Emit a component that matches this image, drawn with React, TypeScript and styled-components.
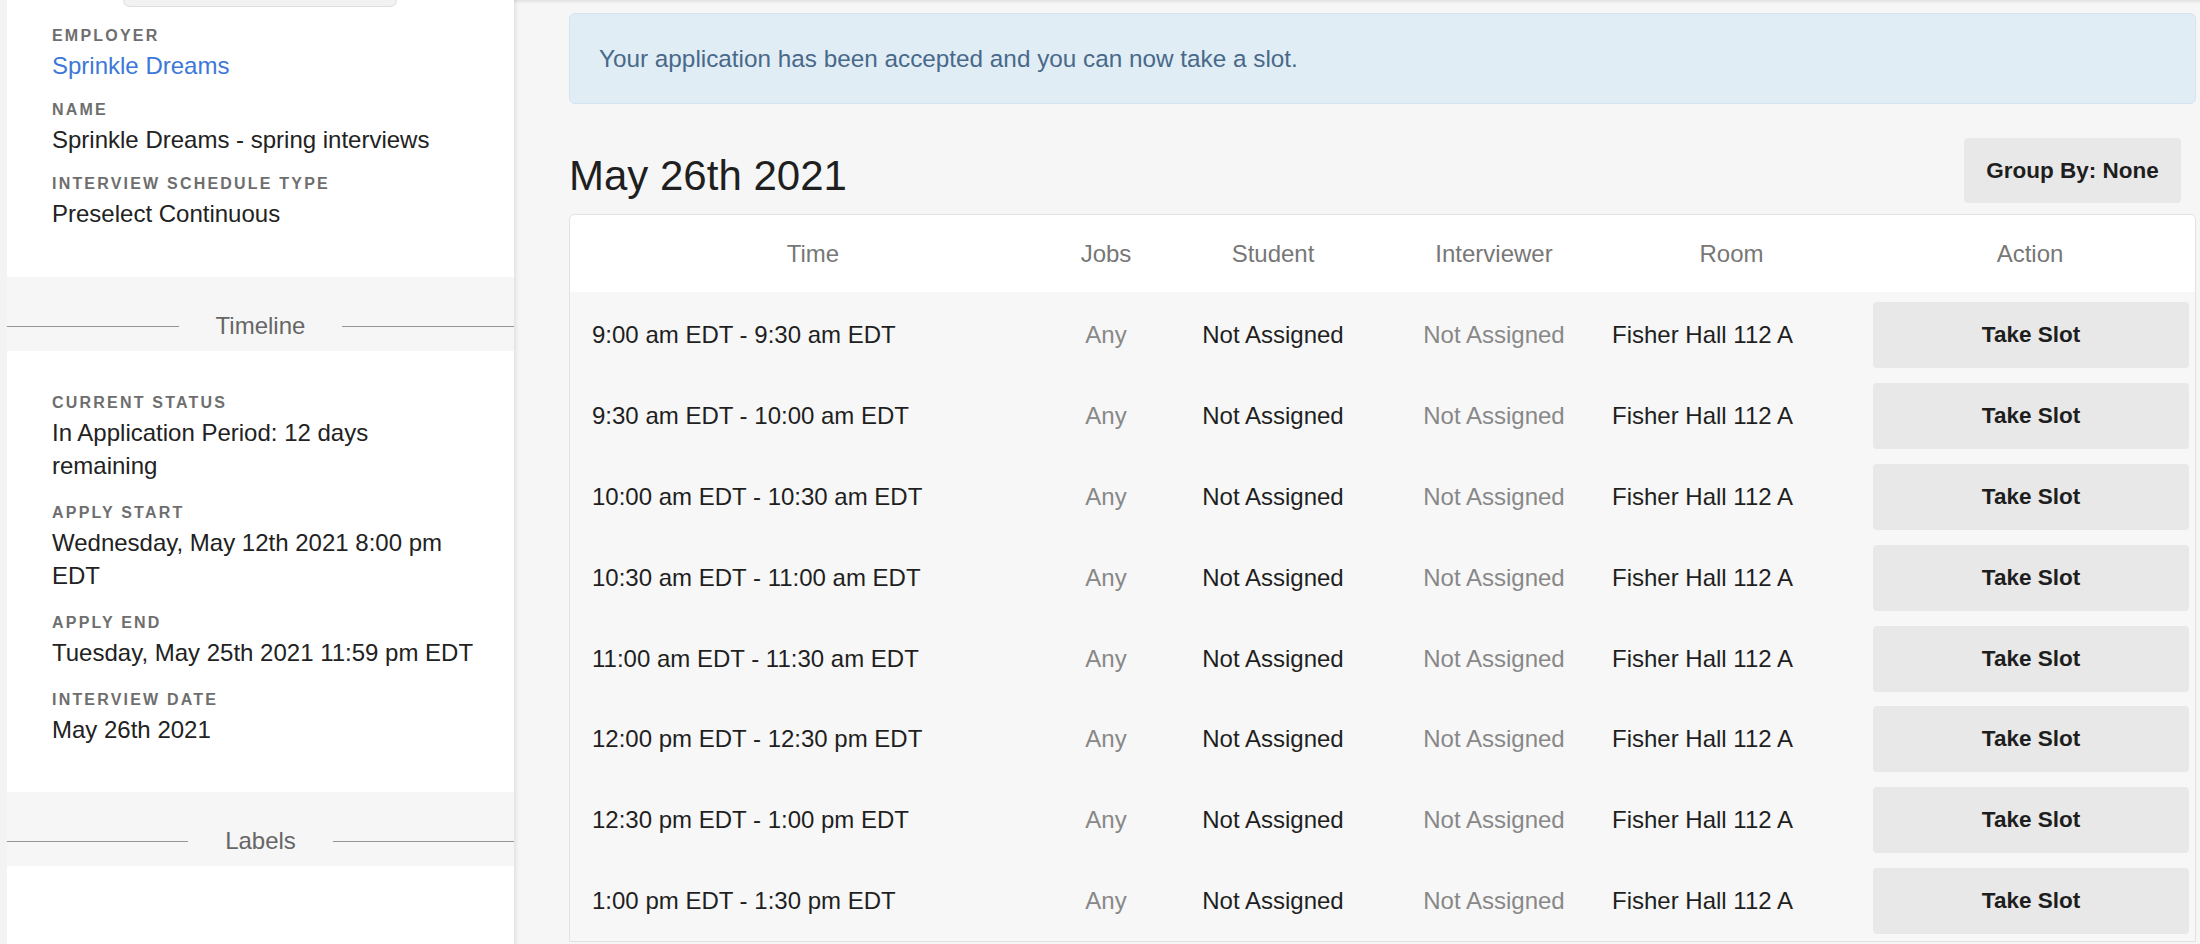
import React from 'react';
import styled, { createGlobalStyle } from 'styled-components';

const GlobalStyle = createGlobalStyle`
  html, body {
    margin: 0;
    padding: 0;
    background: #f6f6f6;
    font-family: 'Liberation Sans', Arial, sans-serif;
    color: #222;
  }
  * { box-sizing: border-box; }
`;

const Page = styled.div`
  display: flex;
  height: 100vh;
  overflow: hidden;
  padding-left: 7px;
  background: #f3f3f3;
`;

const Sidebar = styled.aside`
  width: 507px;
  flex-shrink: 0;
  background: #fff;
  display: flex;
  flex-direction: column;
`;

const TopTab = styled.div`
  margin-left: 116px;
  width: 274px;
  height: 7px;
  background: #f2f2f2;
  border: 1px solid #dedede;
  border-top: none;
  border-radius: 0 0 10px 10px;
`;

const InfoSection = styled.section<{ $gap: number; $top: number; $bottom: number }>`
  display: flex;
  flex-direction: column;
  gap: ${(p) => p.$gap}px;
  padding: ${(p) => p.$top}px 35px ${(p) => p.$bottom}px 45px;
`;

const Field = styled.div`
  display: flex;
  flex-direction: column;
  gap: 2px;
`;

const Label = styled.div`
  font-size: 16px;
  line-height: 22px;
  font-weight: 700;
  letter-spacing: 2.2px;
  text-transform: uppercase;
  color: #6e6e6e;
`;

const Value = styled.div<{ $link?: boolean }>`
  font-size: 24px;
  line-height: 33px;
  max-width: 427px;
  color: ${(p) => (p.$link ? '#3d78d8' : '#222')};
`;

const DividerBand = styled.div`
  background: #f6f6f6;
  padding: 36px 0 12px;
`;

const Divider = styled.div`
  display: flex;
  align-items: center;
  height: 26px;
`;

const Rule = styled.span`
  flex: 1;
  height: 1px;
  background: #959595;
`;

const DividerText = styled.span`
  margin: 0 37px;
  font-size: 24px;
  color: #666;
`;

const Main = styled.main`
  flex: 1;
  min-width: 0;
  display: flex;
  flex-direction: column;
  padding: 13px 4px 0 55px;
  background: #f6f6f6;
  box-shadow: inset 0 4px 3px -2px rgba(0, 0, 0, 0.08),
    inset 5px 0 4px -3px rgba(0, 0, 0, 0.09);
`;

const Banner = styled.div`
  height: 91px;
  display: flex;
  align-items: center;
  padding-left: 29px;
  background: #e1edf5;
  border: 1px solid #d2e4ef;
  border-radius: 6px;
  font-size: 24.3px;
  color: #48698a;
`;

const HeadRow = styled.div`
  display: flex;
  align-items: center;
  justify-content: space-between;
  margin: 34px 0 11px;
  padding-right: 15px;
`;

const DayTitle = styled.h1`
  margin: 11px 0 0;
  font-size: 42px;
  font-weight: 400;
  line-height: 50px;
  color: #1f1f1f;
`;

const GreyButton = styled.button<{ $w?: number }>`
  width: ${(p) => (p.$w ? `${p.$w}px` : '100%')};
  height: 65px;
  border: none;
  border-radius: 4px;
  background: #e8e8e8;
  font-family: inherit;
  font-size: 22.5px;
  font-weight: 700;
  color: #1e1e1e;
  cursor: pointer;
`;

const Card = styled.div`
  border: 1px solid #e2e2e2;
  border-radius: 6px 6px 0 0;
  background: #f7f7f7;
  overflow: hidden;
`;

const COLUMNS = '486px 100px 234px 208px 267px 1fr';

const HeaderRow = styled.div`
  display: grid;
  grid-template-columns: ${COLUMNS};
  height: 77px;
  align-items: center;
  background: #fff;
`;

const HeaderCell = styled.div`
  text-align: center;
  font-size: 24px;
  color: #777;
`;

const Body = styled.div`
  padding-top: 3px;
`;

const Row = styled.div`
  display: grid;
  grid-template-columns: ${COLUMNS};
  height: 80.8px;
  align-items: center;
`;

const Cell = styled.div<{ $align?: 'left' | 'center'; $muted?: boolean; $pad?: number }>`
  text-align: ${(p) => p.$align ?? 'center'};
  padding-left: ${(p) => p.$pad ?? 0}px;
  font-size: 24px;
  white-space: nowrap;
  color: ${(p) => (p.$muted ? '#888' : '#1f1f1f')};
`;

const ActionCell = styled.div`
  padding: 0 6px 0 8px;

  ${GreyButton} {
    height: 66px;
  }
`;

const slots = [
  '9:00 am EDT - 9:30 am EDT',
  '9:30 am EDT - 10:00 am EDT',
  '10:00 am EDT - 10:30 am EDT',
  '10:30 am EDT - 11:00 am EDT',
  '11:00 am EDT - 11:30 am EDT',
  '12:00 pm EDT - 12:30 pm EDT',
  '12:30 pm EDT - 1:00 pm EDT',
  '1:00 pm EDT - 1:30 pm EDT',
];

const headers = ['Time', 'Jobs', 'Student', 'Interviewer', 'Room', 'Action'];

export default function App() {
  return (
    <>
      <GlobalStyle />
      <Page>
        <Sidebar>
          <TopTab />
          <InfoSection $gap={17} $top={18} $bottom={47}>
            <Field>
              <Label>Employer</Label>
              <Value $link>Sprinkle Dreams</Value>
            </Field>
            <Field>
              <Label>Name</Label>
              <Value>Sprinkle Dreams - spring interviews</Value>
            </Field>
            <Field>
              <Label>Interview Schedule Type</Label>
              <Value>Preselect Continuous</Value>
            </Field>
          </InfoSection>

          <DividerBand>
            <Divider>
              <Rule />
              <DividerText>Timeline</DividerText>
              <Rule />
            </Divider>
          </DividerBand>

          <InfoSection $gap={20} $top={41} $bottom={46}>
            <Field>
              <Label>Current Status</Label>
              <Value>In Application Period: 12 days remaining</Value>
            </Field>
            <Field>
              <Label>Apply Start</Label>
              <Value>Wednesday, May 12th 2021 8:00 pm EDT</Value>
            </Field>
            <Field>
              <Label>Apply End</Label>
              <Value>Tuesday, May 25th 2021 11:59 pm EDT</Value>
            </Field>
            <Field>
              <Label>Interview Date</Label>
              <Value>May 26th 2021</Value>
            </Field>
          </InfoSection>

          <DividerBand>
            <Divider>
              <Rule />
              <DividerText>Labels</DividerText>
              <Rule />
            </Divider>
          </DividerBand>
        </Sidebar>

        <Main>
          <Banner>Your application has been accepted and you can now take a slot.</Banner>

          <HeadRow>
            <DayTitle>May 26th 2021</DayTitle>
            <GreyButton $w={217}>Group By: None</GreyButton>
          </HeadRow>

          <Card>
            <HeaderRow>
              {headers.map((h) => (
                <HeaderCell key={h}>{h}</HeaderCell>
              ))}
            </HeaderRow>
            <Body>
              {slots.map((slot) => (
                <Row key={slot}>
                  <Cell $align="left" $pad={22}>
                    {slot}
                  </Cell>
                  <Cell $muted>Any</Cell>
                  <Cell>Not Assigned</Cell>
                  <Cell $muted>Not Assigned</Cell>
                  <Cell $align="left" $pad={14}>
                    Fisher Hall 112 A
                  </Cell>
                  <ActionCell>
                    <GreyButton>Take Slot</GreyButton>
                  </ActionCell>
                </Row>
              ))}
            </Body>
          </Card>
        </Main>
      </Page>
    </>
  );
}
